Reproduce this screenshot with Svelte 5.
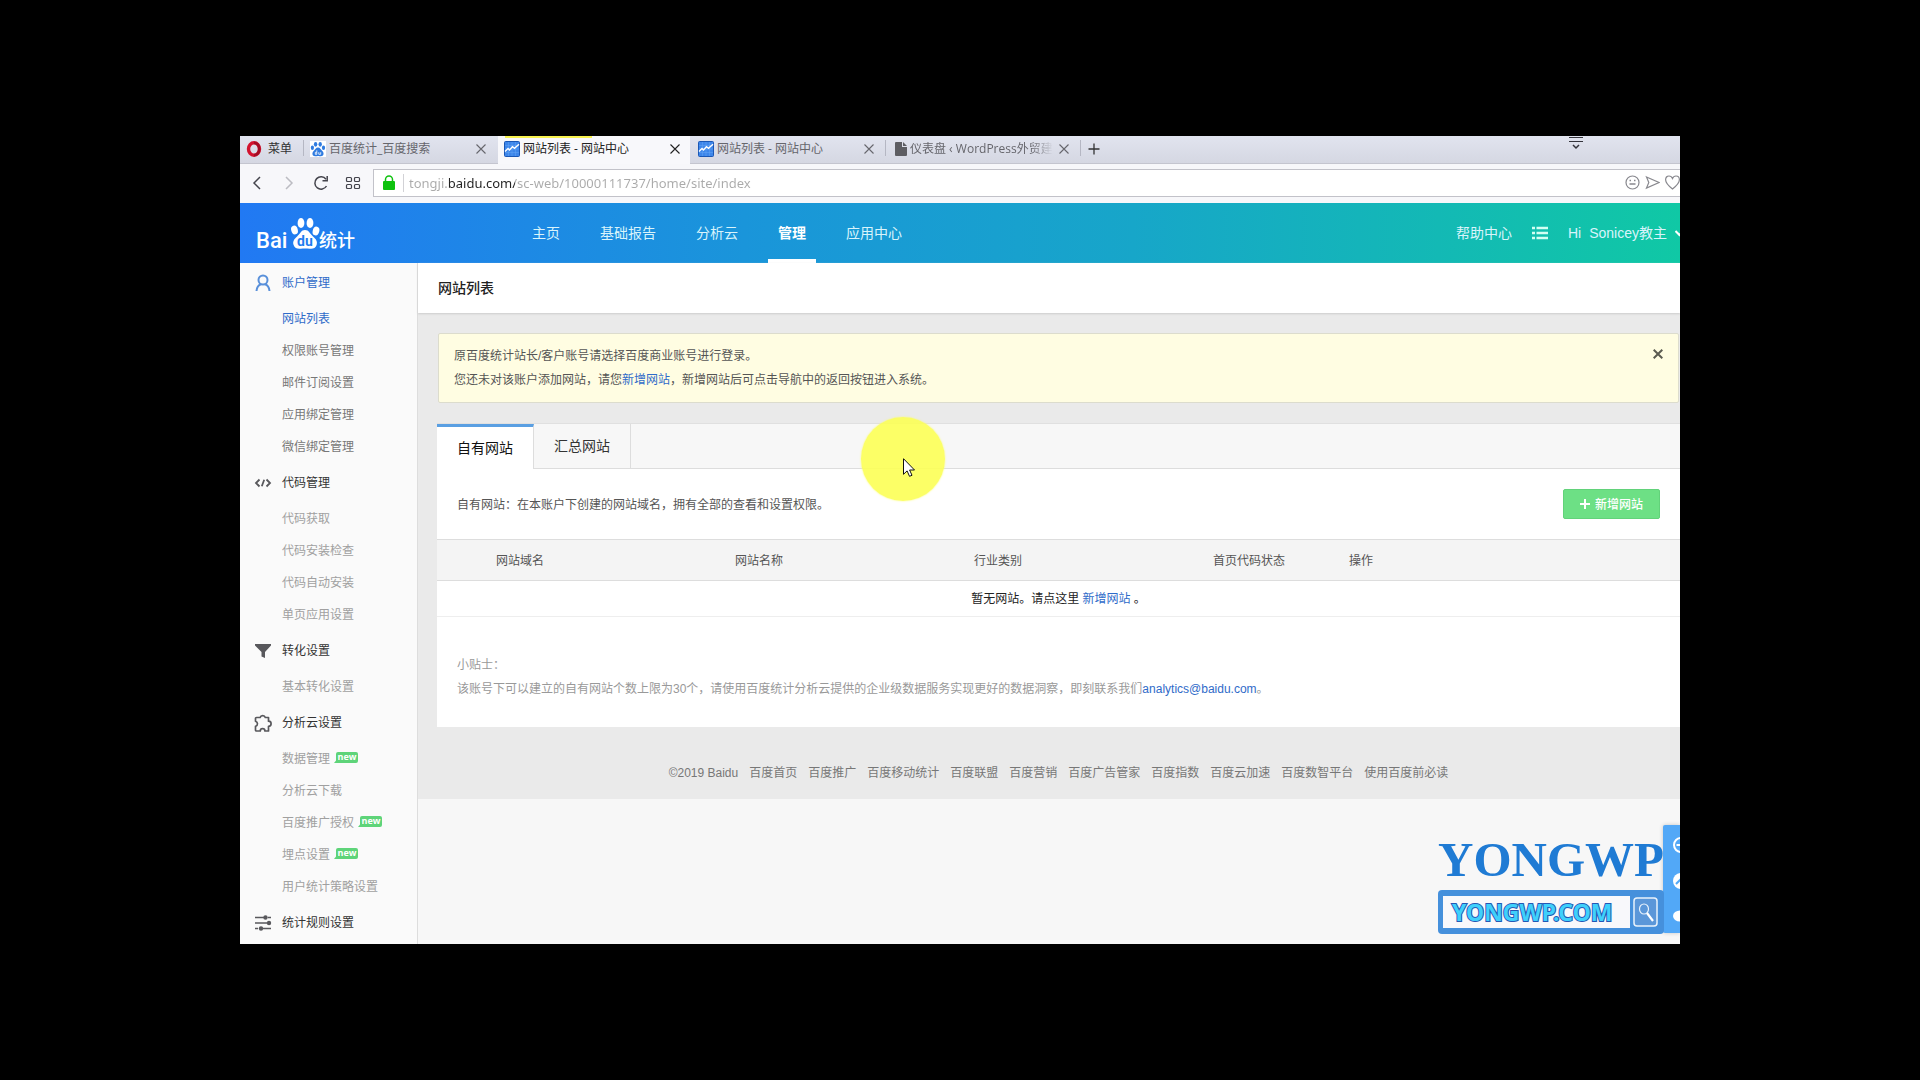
<script lang="ts">
  interface MenuItem {
    label: string;
    state?: 'active' | 'muted';
    isNew?: boolean;
  }

  interface MenuGroup {
    title: string;
    icon: 'user' | 'code' | 'funnel' | 'puzzle' | 'sliders';
    active?: boolean;
    items: MenuItem[];
  }

  const tabs = [
    { title: '百度统计_百度搜索', icon: 'paw', active: false },
    { title: '网站列表 - 网站中心', icon: 'chart', active: true },
    { title: '网站列表 - 网站中心', icon: 'chart', active: false },
    { title: '仪表盘 ‹ WordPress外贸建', icon: 'file', active: false },
  ];

  const navItems = ['主页', '基础报告', '分析云', '管理', '应用中心'];
  const currentNav = '管理';

  const menu: MenuGroup[] = [
    {
      title: '账户管理',
      icon: 'user',
      active: true,
      items: [
        { label: '网站列表', state: 'active' },
        { label: '权限账号管理' },
        { label: '邮件订阅设置' },
        { label: '应用绑定管理' },
        { label: '微信绑定管理' },
      ],
    },
    {
      title: '代码管理',
      icon: 'code',
      items: [
        { label: '代码获取', state: 'muted' },
        { label: '代码安装检查', state: 'muted' },
        { label: '代码自动安装', state: 'muted' },
        { label: '单页应用设置', state: 'muted' },
      ],
    },
    {
      title: '转化设置',
      icon: 'funnel',
      items: [{ label: '基本转化设置', state: 'muted' }],
    },
    {
      title: '分析云设置',
      icon: 'puzzle',
      items: [
        { label: '数据管理', state: 'muted', isNew: true },
        { label: '分析云下载', state: 'muted' },
        { label: '百度推广授权', state: 'muted', isNew: true },
        { label: '埋点设置', state: 'muted', isNew: true },
        { label: '用户统计策略设置', state: 'muted' },
      ],
    },
    { title: '统计规则设置', icon: 'sliders', items: [] },
  ];

  const columns = ['', '网站域名', '网站名称', '行业类别', '首页代码状态', '操作'];

  const footerLinks = [
    '百度首页',
    '百度推广',
    '百度移动统计',
    '百度联盟',
    '百度营销',
    '百度广告管家',
    '百度指数',
    '百度云加速',
    '百度数智平台',
    '使用百度前必读',
  ];

  let url = $state('tongji.baidu.com/sc-web/10000111737/home/site/index');
</script>

{#snippet cross(size: number)}
  <svg width={size} height={size} viewBox="0 0 10 10" aria-hidden="true">
    <path d="M.5.5l9 9M9.500.5l-9 9" fill="none" stroke="currentColor" stroke-width="1.1" />
  </svg>
{/snippet}

<div class="desktop">
  <div class="browser">
    <div class="tabstrip">
      <button class="opera">
        <svg width="16" height="16" viewBox="0 0 16 16" aria-hidden="true">
          <ellipse cx="8" cy="8" rx="5.500" ry="6.200" fill="none" stroke="#d2122e" stroke-width="3.400" />
          <path d="M8 1.800c3 .4 5.200 2.800 5.200 6.200S11 13.800 8 14.200" fill="none" stroke="#a30d25" stroke-width="2.500" />
        </svg>
        菜单
      </button>
      {#each tabs as tab}
        <div class="tab" class:current={tab.active}>
          <button class="tab-title">
            {#if tab.icon === 'paw'}
              <svg width="16" height="16" viewBox="0 0 16 16" aria-hidden="true">
                <rect width="16" height="16" fill="#fff" />
                <g fill="#2f7be0">
                  <ellipse cx="5.600" cy="3.300" rx="1.700" ry="2.400" />
                  <ellipse cx="10.200" cy="3.300" rx="1.700" ry="2.400" />
                  <ellipse cx="2.400" cy="6.800" rx="1.600" ry="2.200" />
                  <ellipse cx="13.500" cy="6.800" rx="1.600" ry="2.200" />
                  <path d="M8 6.500c2.200 0 2.600 2 4.300 3.600 2.300 2.200 1.200 5.200-1.300 5.200-1.200 0-1.800-.3-3-.3s-1.900.3-3 .3c-2.500 0-3.600-3-1.300-5.200C5.300 8.500 5.800 6.500 8 6.500z" />
                </g>
                <path d="M6.800 9.300v4H5.300v-2h1.500M8.800 11.200v2.100h1.900v-2.100" fill="none" stroke="#fff" stroke-width=".8" />
              </svg>
            {:else if tab.icon === 'chart'}
              <svg width="16" height="16" viewBox="0 0 16 16" aria-hidden="true">
                <rect x=".5" y=".5" width="15" height="15" rx="1" fill="#3d86ea" stroke="#1a57b5" />
                <path d="M1 4.500h14M1 8h14M1 11.500h14M4.500 1v14M8 1v14M11.500 1v14" stroke="#65a5f4" stroke-width=".5" />
                <path d="M1 10.500l3-3 1.500 1.500 3-3.200 2 1.500 4.500-4" fill="none" stroke="#fff" stroke-width="1.400" />
              </svg>
            {:else}
              <svg width="12" height="14" viewBox="0 0 12 14" aria-hidden="true">
                <path d="M0 1q0-1 1-1h6v5h5v8q0 1-1 1H1q-1 0-1-1z" fill="#5d5d62" />
                <path d="M8 0l4 4H8z" fill="#5d5d62" />
              </svg>
            {/if}
            <span class:fade={tab.icon === 'file'}>{tab.title}</span>
          </button>
          <button class="tab-close" aria-label="关闭标签页">{@render cross(10)}</button>
        </div>
      {/each}
      <button class="new-tab" aria-label="新标签页">
        <svg width="12" height="12" viewBox="0 0 12 12" aria-hidden="true">
          <path d="M6 .5v11M.5 6h11" stroke="#333" stroke-width="1.300" />
        </svg>
      </button>
      <button class="tab-menu" aria-label="标签菜单">
        <svg width="14" height="14" viewBox="0 0 14 14" aria-hidden="true">
          <path d="M0 1.500h14M0 5.500h14" stroke="#34343c" />
          <path d="M4 9l3 3 3-3" fill="none" stroke="#34343c" stroke-width="1.500" />
        </svg>
      </button>
    </div>

    <div class="toolbar">
      <button aria-label="后退">
        <svg width="16" height="16" viewBox="0 0 16 16" aria-hidden="true">
          <path d="M11 2L5 8l6 6" fill="none" stroke="#44444c" stroke-width="1.500" />
        </svg>
      </button>
      <button aria-label="前进">
        <svg width="16" height="16" viewBox="0 0 16 16" aria-hidden="true">
          <path d="M5 2l6 6-6 6" fill="none" stroke="#bcbcc2" stroke-width="1.500" />
        </svg>
      </button>
      <button aria-label="重新加载">
        <svg width="16" height="16" viewBox="0 0 16 16" aria-hidden="true">
          <path d="M13.500 11A6.200 6.200 0 1 1 13 4.200" fill="none" stroke="#44444c" stroke-width="1.500" />
          <path d="M14.200 1v4.700H9.500" fill="none" stroke="#44444c" stroke-width="1.500" />
        </svg>
      </button>
      <button aria-label="快速拨号">
        <svg width="16" height="16" viewBox="0 0 16 16" aria-hidden="true">
          <g fill="none" stroke="#44444c" stroke-width="1.200">
            <rect x="1.500" y="2.500" width="5" height="4" rx="1" />
            <rect x="9.500" y="2.500" width="5" height="4" rx="1" />
            <rect x="1.500" y="9.500" width="5" height="4" rx="1" />
            <rect x="9.500" y="9.500" width="5" height="4" rx="1" />
          </g>
        </svg>
      </button>
      <div class="address">
        <svg class="lock" width="12" height="15" viewBox="0 0 12 15" aria-hidden="true">
          <rect y="6" width="12" height="9" rx="1" fill="#0ec20e" />
          <path d="M2.500 7V4.500a3.500 3.500 0 0 1 7 0V7" fill="none" stroke="#0ec20e" stroke-width="1.500" />
        </svg>
        <input type="text" aria-label="地址" bind:value={url} />
        <svg width="15" height="15" viewBox="0 0 15 15" aria-hidden="true">
          <circle cx="7.500" cy="7.500" r="6.500" fill="none" stroke="#88888e" stroke-width="1.200" />
          <path d="M4.500 5.500h1.500M9 5.500h1.500M4.500 9h6" stroke="#88888e" stroke-width="1.300" />
        </svg>
        <svg width="15" height="15" viewBox="0 0 15 15" aria-hidden="true">
          <path d="M1.500 2L14 7.500 1.500 13l2.300-5.500z" fill="none" stroke="#88888e" stroke-width="1.200" />
        </svg>
        <svg width="15" height="15" viewBox="0 0 15 15" aria-hidden="true">
          <path d="M7.500 14C3 10.500.6 8 .6 4.800.6 2.500 2.200 1 4 1c1.600 0 2.900 1 3.500 2.500C8.100 2 9.400 1 11 1c1.800 0 3.400 1.500 3.400 3.800C14.400 8 12 10.500 7.500 14z" fill="none" stroke="#88888e" stroke-width="1.200" />
        </svg>
      </div>
    </div>

    <header>
      <a href="#home" class="logo" aria-label="百度统计">
        <svg width="104" height="34" viewBox="-2 0 104 34">
          <text class="logo-latin" x="-1" y="31">Bai</text>
          <g fill="#fff">
            <ellipse cx="44" cy="6" rx="3.400" ry="5" />
            <ellipse cx="53" cy="6" rx="3.400" ry="5" />
            <ellipse cx="37.500" cy="13" rx="3.300" ry="4.500" transform="rotate(-15 37.500 13)" />
            <ellipse cx="59" cy="14" rx="3.300" ry="4.500" transform="rotate(15 59 14)" />
            <path d="M48 13c4 0 4.800 3.500 8 6.500 3 2.500 4.800 5 3.600 8.500-1 3.200-4 4.200-7 3.700-3-.4-6-.4-9 0-3 .4-6-.6-7-3.700-1.200-3.500.6-6 3.500-8.500C43.400 16.500 44 13 48 13z" />
          </g>
          <text class="logo-du" x="40" y="29">du</text>
          <text class="logo-cn" x="62" y="30">统计</text>
        </svg>
      </a>
      <nav class="main-nav">
        {#each navItems as item}
          <a href="#nav" class:current={item === currentNav}>{item}</a>
        {/each}
      </nav>
      <div class="user-nav">
        <a href="#help">帮助中心</a>
        <button aria-label="列表">
          <svg width="16" height="14" viewBox="0 0 16 14" aria-hidden="true">
            <path d="M4.500 2H16M4.500 7H16M4.500 12H16M0 2h3M0 7h3M0 12h3" stroke="#d3fff3" stroke-width="2.400" />
          </svg>
        </button>
        <button class="account">
          <span>Hi</span><span>Sonicey教主</span>
          <svg width="5" height="8" viewBox="0 0 5 8" aria-hidden="true">
            <path d="M.5 2l4 4 4-4" fill="none" stroke="#fff" stroke-width="2" />
          </svg>
        </button>
      </div>
    </header>

    <div class="body">
      <aside>
        {#each menu as group}
          <h2 class:active={group.active}>
            <svg width="18" height="18" viewBox="0 0 18 18" aria-hidden="true">
              {#if group.icon === 'user'}
                <g fill="none" stroke="#5990da" stroke-width="2">
                  <circle cx="9" cy="6" r="4.500" />
                  <path d="M2.500 17c.3-3.800 2-6 4.500-6.800M15.500 17c-.3-3.800-2-6-4.500-6.800" />
                </g>
              {:else if group.icon === 'code'}
                <path d="M5.500 5.500L2 9l3.500 3.500M12.500 5.500L16 9l-3.500 3.500M10.200 5.800l-2.400 6.400" fill="none" stroke="#58585c" stroke-width="1.800" />
              {:else if group.icon === 'funnel'}
                <path d="M1 2h16v1.500L11 10v6l-3.500-1.500V10L1 3.500z" fill="#58585c" />
              {:else if group.icon === 'puzzle'}
                <path d="M2.500 3.500h3.600a2.700 2.700 0 0 1 5.200 0h3.200v3.700a2.600 2.600 0 0 1 0 5.200V17h-3.600a2.300 2.300 0 0 0-4.600 0H2.500q-1 0-1-1v-3.600a2.700 2.700 0 0 0 0-5.200V4.500q0-1 1-1z" fill="none" stroke="#58585c" stroke-width="1.700" stroke-linejoin="round" />
              {:else}
                <path d="M1 3.500h9M14 3.500h3M1 9h12M1 14.500h3M8 14.500h9" stroke="#58585c" stroke-width="1.700" />
                <g fill="#58585c">
                  <circle cx="11.500" cy="3.500" r="2.200" />
                  <circle cx="15" cy="9" r="2.200" />
                  <circle cx="7" cy="14.500" r="2.200" />
                </g>
              {/if}
            </svg>
            {group.title}
          </h2>
          {#if group.items.length}
            <ul>
              {#each group.items as item}
                <li>
                  <a href="#menu" class={item.state}>{item.label}</a>
                  {#if item.isNew}<span class="new">new</span>{/if}
                </li>
              {/each}
            </ul>
          {/if}
        {/each}
      </aside>

      <main>
        <h1>网站列表</h1>
        <div class="content">
          <div class="notice">
            <div>
              <p>原百度统计站长/客户账号请选择百度商业账号进行登录。</p>
              <p>您还未对该账户添加网站，请您<a href="#add">新增网站</a>，新增网站后可点击导航中的返回按钮进入系统。</p>
            </div>
            <button aria-label="关闭提示">
              <svg width="10" height="10" viewBox="0 0 10 10" aria-hidden="true">
                <path d="M.7.7l8.600 8.600M9.300.7L.7 9.300" stroke="#5b5b50" stroke-width="2" />
              </svg>
            </button>
          </div>

          <section class="panel">
            <div class="site-tabs">
              <button class="current">自有网站</button>
              <button>汇总网站</button>
            </div>
            <div class="intro">
              <p>自有网站：在本账户下创建的网站域名，拥有全部的查看和设置权限。</p>
              <button class="add">
                <svg width="10" height="10" viewBox="0 0 10 10" aria-hidden="true">
                  <path d="M5 0v10M0 5h10" stroke="#fff" stroke-width="2" />
                </svg>
                新增网站
              </button>
            </div>
            <table>
              <thead>
                <tr>
                  {#each columns as column}
                    <th>{column}</th>
                  {/each}
                </tr>
              </thead>
              <tbody>
                <tr>
                  <td colspan={columns.length}>暂无网站。请点这里 <a href="#add">新增网站</a> 。</td>
                </tr>
              </tbody>
            </table>
            <div class="tips">
              <p>小贴士：</p>
              <p>该账号下可以建立的自有网站个数上限为30个，请使用百度统计分析云提供的企业级数据服务实现更好的数据洞察，即刻联系我们<a href="mailto:analytics@baidu.com">analytics@baidu.com</a>。</p>
            </div>
          </section>

          <footer>
            <span>©2019 Baidu</span>
            {#each footerLinks as link}
              <a href="#footer">{link}</a>
            {/each}
          </footer>
        </div>
      </main>
    </div>

    <div class="float-bar">
      <svg width="17" height="108" viewBox="0 0 17 108" aria-hidden="true">
        <circle cx="18" cy="20" r="7" fill="none" stroke="#fff" stroke-width="2" />
        <path d="M13.500 20h4" stroke="#fff" stroke-width="2" />
        <circle cx="18" cy="56" r="8" fill="#fff" />
        <path d="M13 59l5-5" stroke="#52a8f7" stroke-width="2" />
        <ellipse cx="17" cy="91" rx="7" ry="5.500" fill="#fff" />
      </svg>
    </div>

    <div class="watermark">
      <div class="wm-name">YONGWP</div>
      <div class="wm-box">
        <span class="wm-site">YONGWP.COM</span>
        <svg width="26" height="30" viewBox="0 0 26 30" aria-hidden="true">
          <rect x="1" y="1" width="23" height="28" rx="3" fill="#5b97d9" stroke="#e8f2fc" stroke-width="1.500" />
          <ellipse cx="11" cy="12" rx="4.500" ry="5" fill="none" stroke="#e8f2fc" stroke-width="1.200" />
          <path d="M14 16l6 8" stroke="#fff" stroke-width="2.200" />
        </svg>
      </div>
    </div>

    <div class="pointer">
      <svg width="12" height="19" viewBox="0 0 12 19" aria-hidden="true">
        <path d="M.5.700v15.600l3.600-3.400 2.400 5.400 2.500-1-2.400-5.300h4.900z" fill="#fff" stroke="#111" />
      </svg>
    </div>
  </div>
</div>

<style>
  :global(body) {
    background: #000;
  }

  .desktop {
    padding: 136px 12.5%;
    font-family: 'Liberation Sans', 'Noto Sans CJK SC', sans-serif;
    font-size: 12px;
    color: #555;
  }

  .browser {
    position: relative;
    overflow: hidden;
    background: #f7f7f7;
  }

  h1,
  h2,
  p,
  ul {
    margin: 0;
    padding: 0;
    font-size: 12px;
    font-weight: 400;
  }

  button {
    padding: 0;
    border: 0;
    background: none;
    font: inherit;
    color: inherit;
  }

  a {
    color: #2f6bc9;
    text-decoration: none;
  }

  svg {
    display: block;
    flex: none;
  }

  /* browser chrome */
  .tabstrip {
    display: flex;
    box-sizing: border-box;
    height: 28px;
    border-bottom: 1px solid #c4c5cf;
    background: linear-gradient(#e1e4ef, #d5d7e2);
    font-family: 'Open Sans', 'Noto Sans CJK SC', sans-serif;
    line-height: 16px;
  }

  .opera {
    display: flex;
    align-items: center;
    gap: 6px;
    box-sizing: border-box;
    width: 63px;
    padding: 0 0 2px 6px;
    color: #333;
  }

  .tab {
    display: flex;
    align-items: center;
    justify-content: space-between;
    box-sizing: border-box;
    width: 195px;
    padding: 0 12px 2px 7px;
    background: linear-gradient(#b5b7c3, #b5b7c3) 0 4px / 1px 16px no-repeat;
    color: #66666c;
  }

  .tab.current {
    width: 192px;
    height: 28px;
    padding: 0 10px 3px 6px;
    background: linear-gradient(#f7f24e, #f7f24e) 7px 0 / 87px 2px no-repeat #f8f8fb;
    color: #222;
  }

  .tab.current ~ .tab {
    padding: 0 11px 2px 10px;
  }

  .tab.current + .tab {
    padding: 0 11px 2px 8px;
    background: none;
  }

  .tab-title {
    display: flex;
    flex: 1;
    align-items: center;
    gap: 3px;
    min-width: 0;
    white-space: nowrap;
  }

  .fade {
    mask-image: linear-gradient(90deg, #000 85%, transparent);
  }

  .new-tab {
    padding: 0 8px 2px;
    background: linear-gradient(#b5b7c3, #b5b7c3) 0 4px / 1px 16px no-repeat;
  }

  .tab-menu {
    align-self: flex-start;
    margin-left: auto;
    padding-right: 97px;
  }

  .toolbar {
    display: flex;
    align-items: center;
    gap: 16px;
    box-sizing: border-box;
    height: 39px;
    padding: 0 0 2px 9px;
    background: #f7f7fa;
  }

  .address {
    display: flex;
    flex: 1;
    align-items: center;
    gap: 5px;
    box-sizing: border-box;
    height: 28px;
    margin-left: -4px;
    padding-left: 9px;
    border: 1px solid #c2c2c9;
    border-right: 0;
    background: #fff;
  }

  .lock {
    margin-right: 3px;
  }

  .address input {
    flex: 1;
    min-width: 0;
    height: 18px;
    padding: 0 0 0 5px;
    border: 0;
    border-left: 1px solid #d2d2d6;
    outline: 0;
    background: linear-gradient(90deg, #aaa 45px, #222 45px, #222 111px, #aaa 111px);
    background-clip: text;
    font-family: 'Noto Sans', sans-serif;
    font-size: 13px;
    line-height: 18px;
    color: transparent;
  }

  /* site header */
  header {
    display: flex;
    height: 60px;
    padding-left: 15px;
    background: linear-gradient(90deg, #2179f3, #1a95da 35%, #17a6c9 62%, #10c8a5);
    font-size: 14px;
    line-height: 60px;
  }

  header a,
  header button {
    color: #d9f4fb;
  }

  .logo {
    width: 267px;
    padding-top: 14px;
    line-height: 0;
  }

  .logo text {
    fill: #fff;
    font-weight: 700;
  }

  .logo .logo-latin {
    font-family: Roboto, sans-serif;
    font-size: 22px;
    font-weight: 500;
  }

  .logo .logo-du {
    font-family: Roboto, sans-serif;
    font-size: 14px;
    fill: #1f7def;
  }

  .logo .logo-cn {
    font-size: 18px;
    font-weight: 500;
  }

  .main-nav {
    display: flex;
    gap: 20px;
  }

  .main-nav a {
    box-sizing: border-box;
    height: 60px;
    padding: 0 10px;
  }

  .main-nav a.current {
    border-bottom: 4px solid #fff;
    font-weight: 700;
    color: #fff;
  }

  .user-nav {
    display: flex;
    align-items: center;
    gap: 20px;
    margin-left: auto;
  }

  .account {
    display: flex;
    align-items: center;
    gap: 8px;
  }

  /* sidebar */
  .body {
    display: flex;
  }

  aside {
    box-sizing: border-box;
    flex: none;
    width: 178px;
    padding-bottom: 1px;
    border-right: 1px solid #ddd;
    background: #fafafa;
  }

  aside h2,
  aside li {
    display: flex;
    align-items: center;
    box-sizing: border-box;
    padding-bottom: 3px;
  }

  aside h2 {
    gap: 10px;
    height: 40px;
    padding-left: 14px;
    color: #333;
  }

  aside h2 svg {
    margin-top: 3px;
  }

  aside h2.active,
  aside a.active {
    color: #2f6bc9;
  }

  aside ul {
    list-style: none;
  }

  aside li {
    gap: 6px;
    height: 32px;
    padding-left: 42px;
  }

  aside a {
    color: #777;
  }

  aside a.muted {
    color: #a0a0a0;
  }

  .new {
    position: relative;
    width: 22px;
    height: 11px;
    border-radius: 2px;
    background: #5ed479;
    font: 700 9px/9px 'Open Sans', sans-serif;
    text-align: center;
    color: #fff;
  }

  .new::before {
    content: '';
    position: absolute;
    left: -2px;
    bottom: 0;
    border-left: 4px solid transparent;
    border-bottom: 5px solid #5ed479;
  }

  /* main column */
  main {
    flex: 1;
    min-width: 0;
  }

  h1 {
    position: relative;
    height: 50px;
    padding-left: 20px;
    background: #fff;
    box-shadow: 0 1px 2px #ccc;
    font-size: 14px;
    font-weight: 500;
    line-height: 50px;
    color: #222;
  }

  .content {
    padding: 20px 0 0 19px;
    background: #eaeaea;
  }

  .notice {
    display: flex;
    align-items: flex-start;
    justify-content: space-between;
    margin: 0 1px 20px;
    padding: 10px 15px;
    border: 1px solid #dcdccd;
    border-radius: 2px;
    background: #fffde2;
    line-height: 24px;
  }

  .notice button {
    padding-top: 5px;
  }

  .panel {
    background: #fff;
  }

  .site-tabs {
    display: flex;
    border-top: 1px solid #e0e0e0;
    background: #f7f7f7;
    box-shadow: inset 0 -1px #ddd;
    font-size: 14px;
    color: #333;
  }

  .site-tabs button {
    box-sizing: border-box;
    width: 97px;
    height: 45px;
    padding-bottom: 4px;
    border-right: 1px solid #ddd;
  }

  .site-tabs .current {
    padding-bottom: 2px;
    border-top: 3px solid #5a9fe2;
    background: #fff;
    color: #111;
  }

  .intro {
    display: flex;
    align-items: center;
    justify-content: space-between;
    height: 70px;
    padding: 0 20px;
  }

  .intro p {
    padding-bottom: 2px;
  }

  .add {
    display: flex;
    align-items: center;
    justify-content: center;
    gap: 5px;
    box-sizing: border-box;
    width: 97px;
    height: 30px;
    padding-bottom: 1px;
    border: 1px solid #62d27a;
    border-radius: 2px;
    background: #6de085;
    font-weight: 500;
    color: #fff;
  }

  table {
    width: 100%;
    border-collapse: collapse;
    table-layout: fixed;
  }

  th {
    width: 239px;
    height: 41px;
    box-sizing: border-box;
    padding: 0 16px 2px;
    border: solid #ddd;
    border-width: 1px 0;
    background: #f4f4f4;
    font-weight: 400;
    text-align: left;
  }

  th:first-child {
    width: 43px;
  }

  th:nth-child(5) {
    width: 136px;
  }

  th:last-child {
    width: auto;
  }

  td {
    box-sizing: border-box;
    height: 36px;
    padding: 0 0 3px;
    border-bottom: 1px solid #eee;
    text-align: center;
    color: #222;
  }

  .tips {
    padding: 36px 20px 26px;
    line-height: 24px;
    color: #999;
  }

  footer {
    display: flex;
    justify-content: center;
    gap: 11px;
    padding: 34px 0 14px;
    line-height: 24px;
    color: #777;
  }

  footer a {
    color: #777;
  }

  /* overlays */
  .float-bar {
    position: absolute;
    right: 0;
    bottom: 11px;
    border-radius: 2px 0 0 2px;
    background: #52a8f7;
    box-shadow: 0 0 4px rgba(0, 0, 0, 0.2);
  }

  .watermark {
    position: absolute;
    right: 16px;
    bottom: 10px;
    width: 226px;
  }

  .wm-name {
    margin-bottom: 5px;
    font: 700 49px/50px 'Liberation Serif', serif;
    color: #1f7bd4;
  }

  .wm-box {
    display: flex;
    align-items: center;
    justify-content: space-between;
    box-sizing: border-box;
    height: 44px;
    padding: 6px 5px;
    border-radius: 4px;
    background: #4590dc;
  }

  .wm-site {
    box-sizing: border-box;
    width: 187px;
    padding-left: 9px;
    background: #f8f8fb;
    font: 700 23px/32px 'Noto Sans', sans-serif;
    color: #3fd0fb;
    -webkit-text-stroke: 2px #2557b5;
    paint-order: stroke fill;
  }

  .pointer {
    position: absolute;
    left: 621px;
    top: 281px;
    box-sizing: border-box;
    width: 84px;
    height: 84px;
    padding: 41px 0 0 42px;
    border-radius: 50%;
    background: rgba(252, 255, 85, 0.9);
    box-shadow: 0 0 2px #fcff6a;
  }
</style>
